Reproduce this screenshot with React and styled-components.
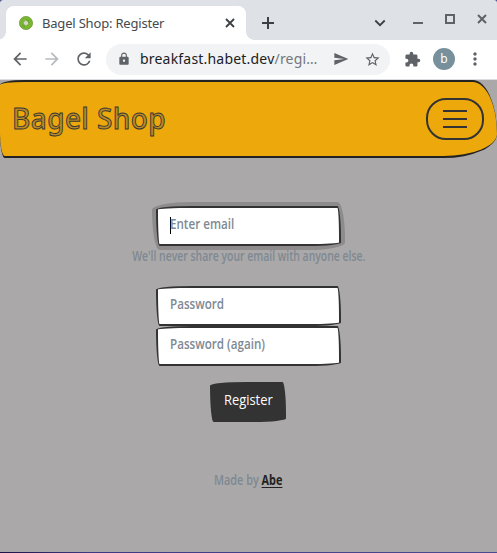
import React from "react";
import styled, { createGlobalStyle } from "styled-components";
import {
  MdArrowBack, MdArrowForward, MdRefresh, MdLock, MdSend, MdStarBorder,
  MdExtension, MdMoreVert,
} from "react-icons/md";

const GlobalStyle = createGlobalStyle`
  *, *::before, *::after { box-sizing: border-box; }
  html, body { margin: 0; padding: 0; overflow: hidden; background: #3c4a9e; }
  button, input { font: inherit; margin: 0; }
`;

const Window = styled.div`
  display: flex;
  flex-direction: column;
  width: 497px;
  height: 553px;
  background: linear-gradient(90deg, #1e1348 0, #3d3a83 90px, #4b4b91 100%);
  border-radius: 3px 3px 0 0;
  overflow: hidden;
  font-family: "Noto Sans", sans-serif;
`;

const TabStrip = styled.div`
  display: flex;
  align-items: flex-end;
  height: 40px;
  flex: none;
  padding-left: 6px;
  background: #dee1e6;
`;

const Tab = styled.div`
  position: relative;
  display: flex;
  align-items: center;
  width: 240px;
  height: 34px;
  padding: 0 9px 0 13px;
  background: #fff;
  border-radius: 8px 8px 0 0;
  font-size: 13px;
  color: #45494d;

  &::before, &::after {
    content: "";
    position: absolute;
    bottom: 0;
    width: 8px;
    height: 8px;
  }
  &::before { left: -8px; background: radial-gradient(circle at 0 0, #dee1e6 7.5px, #fff 8px); }
  &::after { right: -8px; background: radial-gradient(circle at 100% 0, #dee1e6 7.5px, #fff 8px); }
`;

const TabTitle = styled.span`
  margin-left: 9px;
  flex: 1;
  white-space: nowrap;
  letter-spacing: -0.19px;
`;

const Glyph = styled.svg`
  display: block;
  flex: none;
  fill: none;
  stroke: ${(p) => p.$color || "#3c4043"};
  stroke-width: ${(p) => p.$weight || 2};
`;

const StripControls = styled.div`
  display: flex;
  align-items: center;
  flex: 1;
  height: 34px;
  padding-left: 15px;
`;

const MenuChevron = styled(Glyph)`
  margin-left: 99px;
`;

const WindowButtons = styled.div`
  display: flex;
  align-items: center;
  gap: 20px;
  margin: -8px 0 0 26px;
`;

const Toolbar = styled.div`
  display: flex;
  align-items: center;
  height: 40px;
  flex: none;
  padding: 0 0 2px 10px;
  background: #fff;
  border-bottom: 1px solid #dadce0;
  color: #5f6368;
`;

const NavIcons = styled.div`
  display: flex;
  gap: 12px;
  svg { display: block; width: 20px; height: 20px; }
  svg:nth-child(2) { color: #b8babd; }
`;

const AddressBar = styled.div`
  display: flex;
  align-items: center;
  width: 284px;
  height: 31px;
  margin: 1px 0 0 12px;
  padding: 0 9px 0 11px;
  border-radius: 16px;
  background: #f1f3f4;
  svg { display: block; flex: none; }
`;

const Url = styled.span`
  flex: 1;
  margin: -2px 0 0 9px;
  font-size: 14px;
  letter-spacing: 0.2px;
  color: #202124;
  white-space: nowrap;
  em { font-style: normal; color: #73777b; }
`;

const SendIcon = styled(MdSend)`
  margin-right: 1px;
`;

const Bookmark = styled(MdStarBorder)`
  margin-left: 14px;
`;

const ToolbarEnd = styled.div`
  display: flex;
  align-items: center;
  margin: 1px 0 0 14px;
`;

const Avatar = styled.div`
  width: 22px;
  height: 22px;
  margin: 0 11px 0 12px;
  border-radius: 50%;
  background: #78909c;
  color: #fff;
  font-size: 12px;
  line-height: 22px;
  text-align: center;
`;

const MenuDots = styled(MdMoreVert)`
  margin-left: -1px;
`;

const Page = styled.main`
  display: flex;
  flex-direction: column;
  align-items: center;
  height: 472px;
  flex: none;
  background: #aaa8a8;
  font-family: "Open Sans", sans-serif;
`;

const Navbar = styled.nav`
  display: flex;
  align-items: center;
  justify-content: space-between;
  width: 100%;
  height: 78px;
  padding: 0 13px 0 12px;
  border: solid #222;
  border-width: 2px 0;
  border-radius: 25px 25px 55px 5px / 5px 55px 25px 25px;
  background: #eda90c;
`;

const Brand = styled.span`
  font-family: "Noto Sans", sans-serif;
  font-size: 28px;
  font-weight: 500;
  letter-spacing: 0.4px;
  color: #b88a28;
  -webkit-text-stroke: 0.9px #393632;
  white-space: nowrap;
  margin-top: -2px;
`;

const Toggler = styled.button`
  display: flex;
  flex-direction: column;
  align-items: center;
  justify-content: center;
  gap: 6px;
  width: 58px;
  height: 42px;
  padding: 0;
  border: 2px solid #333;
  border-radius: 20px;
  background: transparent;
`;

const TogglerBar = styled.span`
  width: 24px;
  height: 2px;
  background: #333;
`;

const Form = styled.form`
  display: flex;
  flex-direction: column;
  align-items: center;
  margin-top: 48px;
`;

const Field = styled.label`
  display: flex;
  align-items: center;
  width: 185px;
  height: 40px;
  padding: 0 0 6px 11.5px;
  border: 2px solid #333;
  border-radius: 255px 25px 225px 25px / 25px 225px 25px 255px;
  background: #fff;
  box-shadow: ${(p) => (p.$focused ? "0 0 0 4px #8d8b8b" : "none")};
`;

const Caret = styled.i`
  width: 1px;
  height: 17px;
  margin: 5px -1px 0 0;
  background: #000;
`;

const HandText = styled.span`
  display: inline-block;
  transform: scaleX(${(p) => p.$squeeze || 0.775});
  transform-origin: ${(p) => p.$origin || "left"};
  font-size: 15px;
  font-weight: ${(p) => p.$weight || 600};
  line-height: 20px;
  color: ${(p) => p.$color || "#7e8993"};
  white-space: nowrap;
`;

const AuthorLink = styled.a`
  color: #222;
  font-weight: 700;
  text-decoration: underline;
  text-underline-offset: 2px;
`;

const Hint = styled.div`
  display: flex;
  justify-content: center;
  width: 260px;
  height: 20px;
  margin: -1px 0 21px;
`;

const Submit = styled.button`
  width: 76px;
  height: 40px;
  margin: 16px 1px 0 0;
  padding: 0 0 6px;
  border: 0;
  border-radius: 255px 25px 225px 25px / 25px 225px 25px 255px;
  background: #333;
`;

const Footer = styled.footer`
  margin-top: 46px;
`;

function Bagel() {
  return (
    <svg width="14" height="14" viewBox="0 0 14 14">
      <circle cx="7" cy="7" r="4.6" fill="none" stroke="#7cb82f" strokeWidth="4.4" />
      <circle cx="7" cy="7" r="6.5" fill="none" stroke="#73944e" strokeWidth=".7" />
      <circle cx="7" cy="7" r="2.2" fill="#fff" stroke="#71824d" strokeWidth=".7" />
      <path d="M7 3.8A3.2 3.2 0 0 1 10.2 7M3.5 8.8A4 4 0 0 0 6 11" fill="none" stroke="#579d28" strokeWidth=".9" />
      <circle cx="7" cy="7" r=".7" fill="#8a9a76" />
    </svg>
  );
}

export default function App() {
  return (
    <Window>
      <GlobalStyle />
      <TabStrip>
        <Tab>
          <Bagel />
          <TabTitle>Bagel Shop: Register</TabTitle>
          <Glyph width="14" height="14" viewBox="0 0 14 14" $weight={1.8}><path d="M3 3l8 8M11 3l-8 8" /></Glyph>
        </Tab>
        <StripControls>
          <Glyph width="14" height="14" viewBox="0 0 14 14"><path d="M7 1v12M1 7h12" /></Glyph>
          <MenuChevron width="12" height="12" viewBox="0 0 12 12" $weight={1.8}><path d="M1.3 3.5L6 8.2l4.7-4.7" /></MenuChevron>
          <WindowButtons>
            <Glyph width="12" height="12" viewBox="0 0 12 12" $color="#5f6368"><path d="M1 10h10" /></Glyph>
            <Glyph width="12" height="12" viewBox="0 0 12 12" $color="#5f6368"><path d="M2 2h8v8H2z" /></Glyph>
            <Glyph width="12" height="12" viewBox="0 0 12 12" $color="#5f6368"><path d="M2 2l8 8M10 2l-8 8" /></Glyph>
          </WindowButtons>
        </StripControls>
      </TabStrip>
      <Toolbar>
        <NavIcons><MdArrowBack /><MdArrowForward /><MdRefresh /></NavIcons>
        <AddressBar>
          <MdLock size={14} />
          <Url>breakfast.habet.dev<em>/regi…</em></Url>
          <SendIcon size={16} />
          <Bookmark size={17} />
        </AddressBar>
        <ToolbarEnd>
          <MdExtension size={17} />
          <Avatar>b</Avatar>
          <MenuDots size={20} />
        </ToolbarEnd>
      </Toolbar>
      <Page>
        <Navbar>
          <Brand>Bagel Shop</Brand>
          <Toggler type="button" aria-label="Toggle navigation"><TogglerBar /><TogglerBar /><TogglerBar /></Toggler>
        </Navbar>
        <Form>
          <Field $focused><Caret /><HandText>Enter email</HandText></Field>
          <Hint><HandText $origin="center" $squeeze={0.695} $weight={600}>We'll never share your email with anyone else.</HandText></Hint>
          <Field><HandText>Password</HandText></Field>
          <Field><HandText>Password (again)</HandText></Field>
          <Submit type="button"><HandText $origin="center" $squeeze={0.86} $weight={400} $color="#fff">Register</HandText></Submit>
        </Form>
        <Footer><HandText $origin="center" $squeeze={0.725}>Made by <AuthorLink>Abe</AuthorLink></HandText></Footer>
      </Page>
    </Window>
  );
}
